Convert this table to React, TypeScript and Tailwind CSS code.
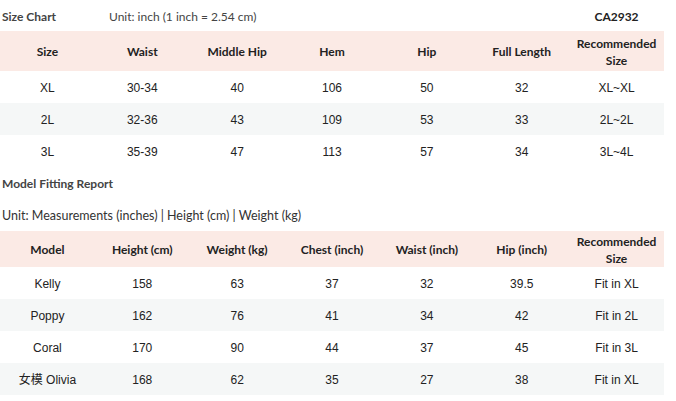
const sizeHead = ["Size", "Waist", "Middle Hip", "Hem", "Hip", "Full Length", "Recommended Size"];
const sizeRows = [
  ["XL", "30-34", "40", "106", "50", "32", "XL~XL"],
  ["2L", "32-36", "43", "109", "53", "33", "2L~2L"],
  ["3L", "35-39", "47", "113", "57", "34", "3L~4L"],
];

const modelHead = ["Model", "Height (cm)", "Weight (kg)", "Chest (inch)", "Waist (inch)", "Hip (inch)", "Recommended Size"];
const modelRows = [
  ["Kelly", "158", "63", "37", "32", "39.5", "Fit in XL"],
  ["Poppy", "162", "76", "41", "34", "42", "Fit in 2L"],
  ["Coral", "170", "90", "44", "37", "45", "Fit in 3L"],
  ["女模 Olivia", "168", "62", "35", "27", "38", "Fit in XL"],
];

function Table({ head, rows, headH }: { head: string[]; rows: string[][]; headH: string }) {
  return (
    <div className="w-[664px]">
      <div className={`grid grid-cols-7 bg-[#fbeae5] ${headH}`}>
        {head.map((h) => (
          <div
            key={h}
            className="flex items-center justify-center text-center pt-[1px] font-['Lato',sans-serif] font-bold text-[12px] leading-[17px] text-[#222] px-3"
          >
            {h}
          </div>
        ))}
      </div>
      {rows.map((r, i) => (
        <div key={i} className={`grid grid-cols-7 h-[32px] ${i % 2 === 1 ? "bg-[#f5f7f7]" : "bg-white"}`}>
          {r.map((c, j) => (
            <div
              key={j}
              className="flex items-center justify-center pt-[2px] font-['Liberation_Sans','Noto_Sans_CJK_SC',sans-serif] text-[12px] text-[#222]"
            >
              {c}
            </div>
          ))}
        </div>
      ))}
    </div>
  );
}

export default function App() {
  return (
    <div className="w-[676px] h-[401px] bg-white overflow-hidden">
      {/* Size chart */}
      <div className="h-[31px] w-[664px] flex items-center pt-[2px] font-['Lato',sans-serif] text-[12px] text-[#444]">
        <span className="w-[109px] pl-[2px] font-bold">Size Chart</span>
        <span className="flex-1">Unit: inch (1 inch = 2.54 cm)</span>
        <span className="w-[95px] text-center font-bold text-[#222]">CA2932</span>
      </div>
      <Table head={sizeHead} rows={sizeRows} headH="h-[40px]" />

      {/* Model fitting */}
      <div className="h-[32px] flex items-center pt-[2px] pl-[2px] font-['Lato',sans-serif] font-bold text-[12px] text-[#444]">
        Model Fitting Report
      </div>
      <div className="h-[32px] flex items-center pt-[3px] pl-[2px] font-['Lato',sans-serif] text-[12.5px] text-[#333]">
        Unit: Measurements (inches) | Height (cm) | Weight (kg)
      </div>
      <Table head={modelHead} rows={modelRows} headH="h-[36px]" />
    </div>
  );
}
